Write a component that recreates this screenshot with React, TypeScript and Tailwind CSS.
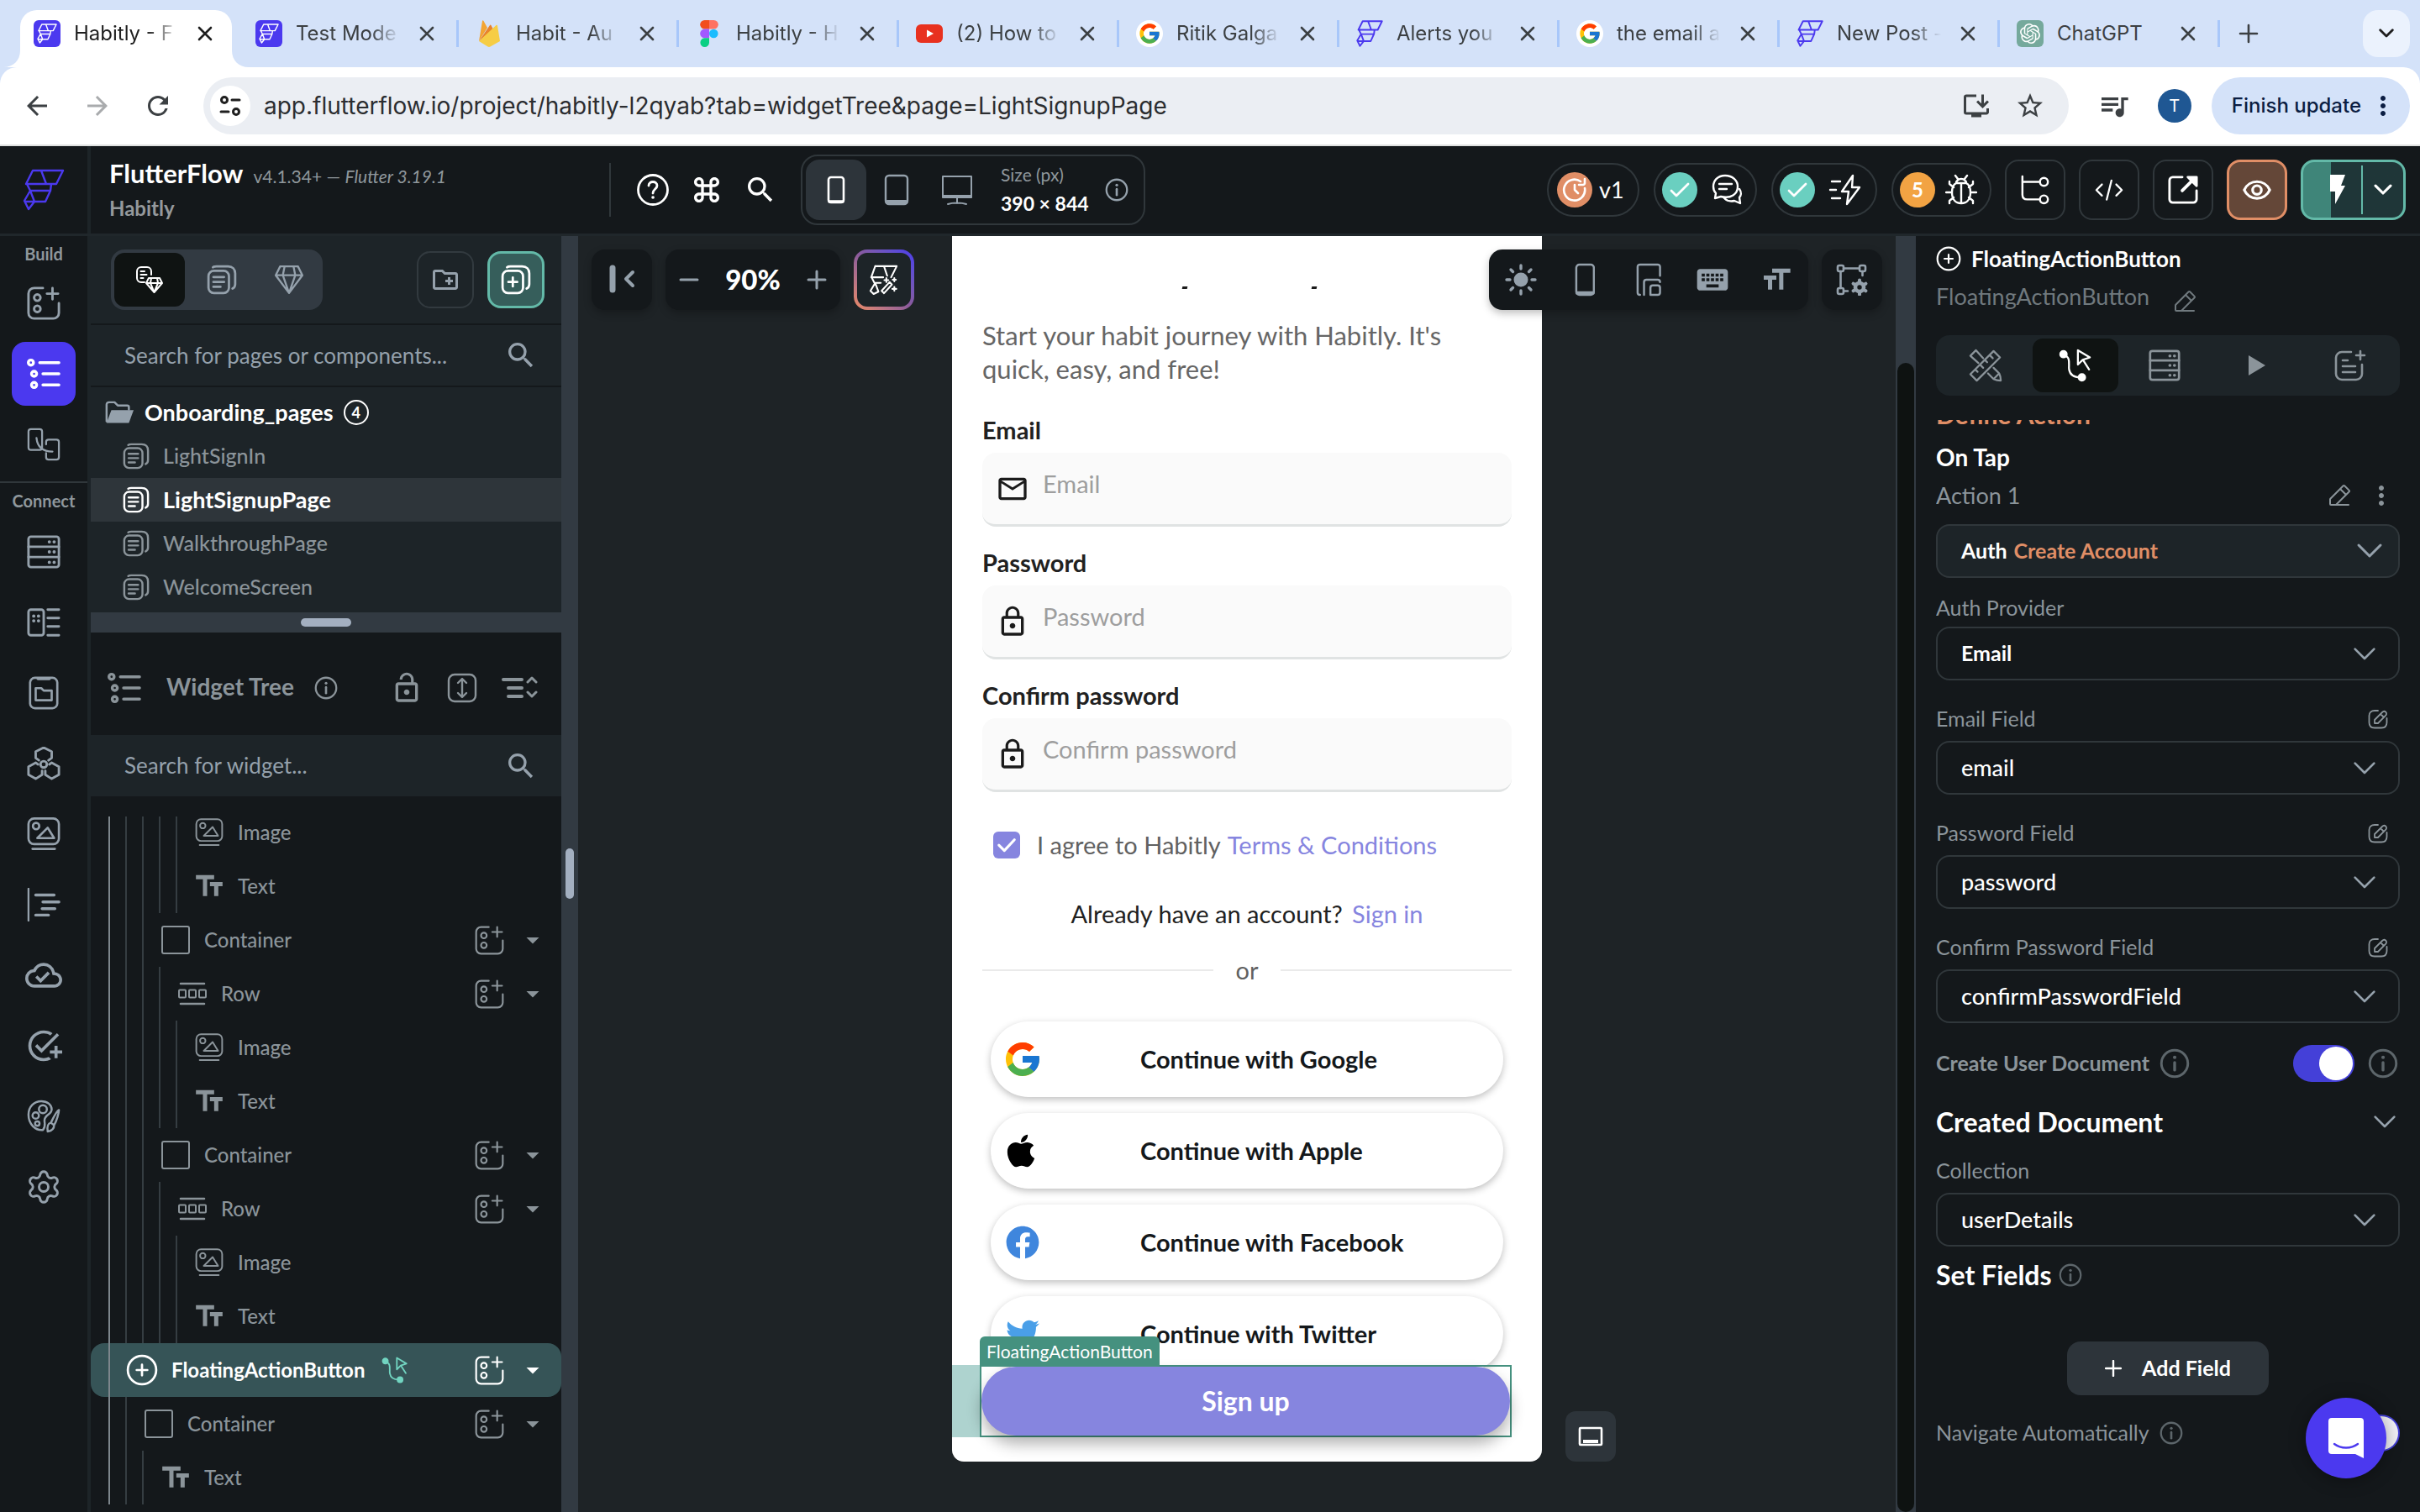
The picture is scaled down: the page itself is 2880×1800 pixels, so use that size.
import type { ReactNode } from "react";
import {
  MdAddTask,
  MdArrowBack,
  MdArrowDropDown,
  MdArrowForward,
  MdFormatSize,
  MdKeyboard,
  MdKeyboardCommandKey,
  MdLockOpen,
  MdLockOutline,
  MdMoreVert,
  MdOutlineCloudDone,
  MdOutlineCreateNewFolder,
  MdOutlineInstallDesktop,
  MdOutlineMail,
  MdQueueMusic,
  MdRefresh,
  MdSearch,
  MdStarBorder,
  MdTextFields,
} from "react-icons/md";
import { FcGoogle } from "react-icons/fc";
import { FaApple, FaFacebook, FaTwitter } from "react-icons/fa";
import { SiOpenai } from "react-icons/si";
import { PiPencilSimpleLine } from "react-icons/pi";
import { Settings } from "lucide-react";

/* ---------- icons ---------- */

type IconProps = { className?: string };

function Svg({ box, w = 2, className, children }: { box: string; w?: number; className?: string; children: ReactNode }) {
  return (
    <svg
      viewBox={box}
      fill="none"
      stroke="currentColor"
      strokeWidth={w}
      strokeLinecap="round"
      strokeLinejoin="round"
      className={className}
      aria-hidden="true"
    >
      {children}
    </svg>
  );
}

const FlowLogo = ({ className, w = 2.4 }: IconProps & { w?: number }) => (
  <Svg box="0 0 50 50" w={w} className={className}>
    <path d="M12 2H48L40 18H4L12 2ZM22 2l6 16M5 18l4 8h24l1-8M9 26 2 38l5 10 7-9-5-13M33 26l-6 13H3" />
  </Svg>
);

const AddWidget = ({ className, w = 3 }: IconProps & { w?: number }) => (
  <Svg box="0 0 42 42" w={w} className={className}>
    <path d="M20 2H9a7 7 0 0 0-7 7v24a7 7 0 0 0 7 7h24a7 7 0 0 0 7-7V21" />
    <path d="M32 2v14M25 9h14" />
    <circle cx="13" cy="14" r="4" />
    <circle cx="13" cy="28" r="4" />
  </Svg>
);

const TreeList = ({ className }: IconProps) => (
  <Svg box="0 0 42 42" w={3.6} className={className}>
    <circle cx="5" cy="7" r="3.2" />
    <path d="M16 7h24M20 21h20M20 35h20" />
    <circle cx="9" cy="21" r="3.2" />
    <circle cx="9" cy="35" r="3.2" />
  </Svg>
);

const Storyboard = ({ className }: IconProps) => (
  <Svg box="0 0 42 42" w={2.4} className={className}>
    <rect x="2" y="2" width="17" height="26" rx="3" />
    <path d="M24 21v-3a3 3 0 0 1 3-3h10a3 3 0 0 1 3 3v19a3 3 0 0 1-3 3H27a3 3 0 0 1-3-3v-5" />
    <path d="M12 13c1 10 7 17 20 17" />
  </Svg>
);

const Server = ({ className }: IconProps) => (
  <Svg box="0 0 42 42" w={3} className={className}>
    <rect x="2" y="2" width="38" height="38" rx="3" />
    <path d="M2 14.600h38M2 27.400h38" />
    <path d="M28 8.500h.1M34 8.500h.1M28 21h.1M34 21h.1M28 34h.1M34 34h.1" strokeWidth="4" />
  </Svg>
);

const DataTypes = ({ className }: IconProps) => (
  <Svg box="0 0 42 42" w={3} className={className}>
    <rect x="2" y="5" width="19" height="32" rx="3" />
    <path d="M26 5h14M26 15.500h14M26 26h14M26 37h14" />
    <path d="M8.500 13h.1M14.500 13h.1M8.500 19h.1M14.500 19h.1" strokeWidth="4" />
  </Svg>
);

const Assets = ({ className }: IconProps) => (
  <Svg box="0 0 42 42" w={2.8} className={className}>
    <rect x="4" y="2" width="34" height="38" rx="6" />
    <path d="M14 3h14" strokeWidth="4" />
    <path d="M11 15h7l3 3h10v12H11z" />
  </Svg>
);

const Hexes = ({ className }: IconProps) => (
  <Svg box="0 0 42 42" w={3} className={className}>
    <path d="M15 17l-4-3V6l10-5 10 5v8l-4 3" />
    <path d="M14 22l-3-2-9 5v10l9 5 8-5v-5M28 22l3-2 9 5v10l-9 5-8-5v-5" />
    <circle cx="21" cy="22" r="4" />
  </Svg>
);

const Picture = ({ className, w = 2.8 }: IconProps & { w?: number }) => (
  <Svg box="0 0 42 42" w={w} className={className}>
    <rect x="2" y="1.500" width="38" height="32" rx="7" />
    <circle cx="11.500" cy="11" r="4" />
    <path d="M13 26 L26 13 34 26ZM7 39.500h28" />
  </Svg>
);

const Timeline = ({ className }: IconProps) => (
  <Svg box="0 0 42 42" w={3.6} className={className}>
    <path d="M2 1v40" strokeWidth="2.4" />
    <path d="M11 9h23M20 17.500h20M19 26h16M11 34h16" />
  </Svg>
);

const Palette = ({ className }: IconProps) => (
  <Svg box="0 0 42 42" w={2.6} className={className}>
    <path d="M20 38c-9 1-18-7-18-19C2 9 9 2 18 2c8 0 13 5 13 10 0 7-9 7-9 14 0 5 2 7-2 12z" />
    <circle cx="20" cy="12" r="5" />
    <circle cx="11" cy="20" r="4" />
    <circle cx="13" cy="30" r="2.800" />
    <path d="M40 13c-3 1-8 12-10 16l4 3c3-5 6-15 6-19zM30 29c-4 1-5 4-4 11 5-1 8-4 8-8" />
  </Svg>
);

const Pages = ({ className, plus }: IconProps & { plus?: boolean }) => (
  <Svg box="0 0 34 34" w={2.6} className={className}>
    <rect x="2" y="7" width="23" height="25" rx="6" />
    <path d="M7 3c1-1 3-1 4-1h13c5 0 8 3 8 8v12c0 2-1 4-3 5" />
    {plus ? <path d="M13.500 14.500v10M8.500 19.500h10" /> : <path d="M7.500 14h12M7.500 19.500h12M7.500 25h8" />}
  </Svg>
);

const Gem = ({ className }: IconProps) => (
  <Svg box="0 0 34 34" w={2.2} className={className}>
    <path d="M7 2h20l5 10-15 20L2 12zM2 12h30M12 2l-2 10 7 20 7-20-2-10" />
  </Svg>
);

const PageGem = ({ className }: IconProps) => (
  <Svg box="0 0 34 34" w={2} className={className}>
    <path d="M11 20H7a5 5 0 0 1-5-5V7a5 5 0 0 1 5-5h7a5 5 0 0 1 5 5v4M6.500 7H11M6.500 11h7M6.500 15h3" />
    <path d="M16 15h13l3 6-9.500 11L13 21zM13 21h19M19 15l-1 6 4.500 11L27 21l-1-6" />
  </Svg>
);

const OpenFolder = ({ className }: IconProps) => (
  <Svg box="0 0 38 30" w={2.6} className={className}>
    <path d="M3 26V5a3 3 0 0 1 3-3h7l4 4h12a2 2 0 0 1 2 2v3" />
    <path d="M9 12h28l-6 16H3z" fill="currentColor" stroke="none" />
  </Svg>
);

const Info = ({ className }: IconProps) => (
  <Svg box="0 0 32 32" w={2.6} className={className}>
    <circle cx="16" cy="16" r="14" />
    <path d="M16 15v8" strokeWidth="3" />
    <path d="M16 9.500h.1" strokeWidth="3.600" />
  </Svg>
);

const Help = ({ className }: IconProps) => (
  <Svg box="0 0 40 40" w={2.8} className={className}>
    <circle cx="20" cy="20" r="17.500" />
    <path d="M15 15c0-6 10-6 10 0 0 4-5 4-5 9" />
    <path d="M20 29h.1" strokeWidth="3.600" />
  </Svg>
);

const PlusCircle = ({ className }: IconProps) => (
  <Svg box="0 0 36 36" w={2.6} className={className}>
    <circle cx="18" cy="18" r="16" />
    <path d="M18 12v12M12 18h12" />
  </Svg>
);

const Chevron = ({ className, w = 3 }: IconProps & { w?: number }) => (
  <Svg box="0 0 32 20" w={w} className={className}>
    <path d="M3 3l13 13L29 3" />
  </Svg>
);

const Flow = ({ className }: IconProps) => (
  <Svg box="0 0 42 42" w={2.4} className={className}>
    <circle cx="6" cy="7" r="4" fill="currentColor" />
    <circle cx="29" cy="36" r="4" fill="currentColor" />
    <path d="M6 8c10 2 6 12 7 18s5 10 14 10" />
    <path d="M24 2v18l6-6 9-3zM31 15l7 11" />
  </Svg>
);

const Tools = ({ className }: IconProps) => (
  <Svg box="0 0 42 42" w={2.4} className={className}>
    <path d="M2 32 31 3l8 8-29 29zM8 26l3 3M14 20l4 4M20 14l3 3M26 8l4 4" />
    <path d="M12 18 2 9l7-7 9 10M24 31l7 7c2 1 5 2 9 2 0-4-1-7-2-9l-7-7M31 38l7-7" />
  </Svg>
);

const RowIcon = ({ className }: IconProps) => (
  <Svg box="0 0 36 30" w={2} className={className}>
    <path d="M4 3h28M4 27h28" strokeWidth="2.600" />
    <rect x="2" y="10.500" width="8" height="9" rx="1" />
    <rect x="14" y="10.500" width="8" height="9" rx="1" />
    <rect x="26" y="10.500" width="8" height="9" rx="1" />
  </Svg>
);

const BoxIcon = ({ className }: IconProps) => (
  <Svg box="0 0 36 36" w={2} className={className}>
    <rect x="2" y="2" width="32" height="32" rx="2" />
  </Svg>
);

const EditBox = ({ className }: IconProps) => (
  <Svg box="0 0 24 24" w={1.8} className={className}>
    <path d="M12 2H8C4 2 1.500 4.500 1.500 8v8c0 4 2.500 6.500 6.500 6.500h8c4 0 6.500-2.500 6.500-6.500v-5" />
    <path d="M8 13l9-9c1.500-1.500 3-1.500 4.200-.3s1.200 2.700-.2 4.100L12 17H8zM15 6l4 4" />
  </Svg>
);

const PhoneIcon = ({ className }: IconProps) => (
  <Svg box="0 0 26 42" w={2.6} className={className}>
    <rect x="2" y="2" width="22" height="38" rx="4" />
    <path d="M3 37.500h20" strokeWidth="4" />
  </Svg>
);

const Tablet = ({ className }: IconProps) => (
  <Svg box="0 0 30 38" w={2.4} className={className}>
    <rect x="2" y="2" width="26" height="34" rx="4" />
    <path d="M4 33.500h22" strokeWidth="5" />
  </Svg>
);

const Desktop = ({ className }: IconProps) => (
  <Svg box="0 0 38 38" w={2} className={className}>
    <path d="M2 3h34v25H2z" />
    <path d="M3 27h32" strokeWidth="4" />
    <path d="M19 29v6M8 36c6-2 16-2 22 0" />
  </Svg>
);

const Sun = ({ className }: IconProps) => (
  <Svg box="0 0 38 38" w={3.4} className={className}>
    <circle cx="19" cy="19" r="8.500" fill="currentColor" stroke="none" />
    <path d="M19 2v4M19 32v4M2 19h4M32 19h4M7 7l2.500 2.500M28.500 28.500 31 31M31 7l-2.500 2.500M9.500 28.500 7 31" />
  </Svg>
);

const Screens = ({ className }: IconProps) => (
  <Svg box="0 0 32 42" w={2.6} className={className}>
    <path d="M30 16V5a3 3 0 0 0-3-3H5a3 3 0 0 0-3 3v32c0 2 1 3 3 3M10 40V24c0-2 1-3 3-3h14c2 0 3 1 3 3M18 40V31c0-2 1-3 3-3h6c2 0 3 1 3 3v6c0 2-1 3-3 3h-9z" />
  </Svg>
);

const NodesGear = ({ className }: IconProps) => (
  <Svg box="0 0 38 38" w={2.6} className={className}>
    <rect x="2" y="2" width="7" height="7" rx="2" />
    <rect x="28" y="2" width="7" height="7" rx="2" />
    <rect x="2" y="29" width="7" height="7" rx="2" />
    <path d="M9 5.500h19M5.500 9v20M31.500 9v5M9 32.500h5" />
    <circle cx="28" cy="28" r="5" strokeWidth="4.600" />
    <path d="M28 19.500v2M28 34.500v2M20.600 23.700l1.700 1M33.700 31.300l1.700 1M20.600 32.300l1.700-1M33.700 24.700l1.700-1" strokeWidth="4" />
  </Svg>
);

const Sparkle = ({ className }: IconProps) => (
  <Svg box="0 0 38 38" w={2.2} className={className}>
    <path d="M8 2h27l-7 14M8 2 3 16h15M19 2l4 12M4 17l3 6h8M8 23 2 33l4 4 6-3-4-11" />
    <path d="M16 33l10-11 3 3-10 11zM22 17v5M19.500 19.500h5M32 17v4M30 19h4M32 28v5M29.500 30.500h5" />
  </Svg>
);

const Bug = ({ className }: IconProps) => (
  <Svg box="0 0 38 38" w={2.4} className={className}>
    <path d="M13 11c-4 2-5 7-5 11 0 8 4 13 11 13s11-5 11-13c0-4-1-9-5-11zM19 12v22M13 11a6 5 0 0 1 12 0M12 2l3 4M26 2l-3 4M1 22h7M30 22h7M5 9v3l5 4M33 9v3l-5 4M5 35v-3l5-4M33 35v-3l-5-4" />
  </Svg>
);

const Chat = ({ className }: IconProps) => (
  <Svg box="0 0 38 38" w={2.4} className={className}>
    <path d="M17 2C8 2 3 8 3 15c0 4 1 6 3 8l-1 6 7-2c12 3 20-3 20-12 0-7-6-13-15-13zM10 12h15M10 18h9" />
    <path d="M34 18c3 4 2 8 0 10l1 7-7-3c-4 1-9 0-12-3" />
  </Svg>
);

const Optimize = ({ className }: IconProps) => (
  <Svg box="0 0 40 38" w={2.4} className={className}>
    <path d="M4 9h10M2 19h7M4 29h10M29 2 16 21h8l-2 15 15-20h-9z" />
  </Svg>
);

const Branch = ({ className }: IconProps) => (
  <Svg box="0 0 38 38" w={2.6} className={className}>
    <path d="M3 2v23c0 4 2 6 6 6h15M3 9h21" />
    <circle cx="30" cy="9" r="5" />
    <circle cx="30" cy="31" r="5" />
  </Svg>
);

const Code = ({ className }: IconProps) => (
  <Svg box="0 0 38 30" w={2.4} className={className}>
    <path d="M10 8l-7 7 7 7M28 8l7 7-7 7M22 3l-6 24" />
  </Svg>
);

const OpenExternal = ({ className }: IconProps) => (
  <Svg box="0 0 38 38" w={3} className={className}>
    <path d="M18 3H6a4 4 0 0 0-4 4v24a4 4 0 0 0 4 4h26a4 4 0 0 0 4-4V20" />
    <path d="M18 20 32 6" strokeWidth="4" />
    <path d="M25 3h11v11z" fill="currentColor" />
  </Svg>
);

const Eye = ({ className }: IconProps) => (
  <Svg box="0 0 38 30" w={3.4} className={className}>
    <path d="M3 15C9 1 29 1 35 15 29 29 9 29 3 15z" />
    <circle cx="19" cy="15" r="5.500" />
  </Svg>
);

const NoteAdd = ({ className }: IconProps) => (
  <Svg box="0 0 38 38" w={2.6} className={className}>
    <path d="M20 3H9a7 7 0 0 0-7 7v19a7 7 0 0 0 7 7h17a7 7 0 0 0 7-7V18M31 2v10M26 7h10M10 13h6M10 20h15M10 27h15" />
  </Svg>
);

const Close = ({ className }: IconProps) => (
  <Svg box="0 0 20 20" w={2.6} className={className}>
    <path d="M3 3l14 14M17 3 3 17" />
  </Svg>
);

const Figma = () => (
  <svg viewBox="0 0 22 32" className="h-8 w-[22px]" aria-hidden="true">
    <path d="M5.500 0H11v10.600H5.500a5.300 5.300 0 0 1 0-10.600z" fill="#f24e1e" />
    <path d="M11 0h5.500a5.300 5.300 0 0 1 0 10.600H11z" fill="#ff7262" />
    <path d="M5.500 10.600H11v10.700H5.500a5.300 5.300 0 0 1 0-10.700z" fill="#a259ff" />
    <circle cx="16.300" cy="16" r="5.300" fill="#1abcfe" />
    <path d="M5.500 21.300H11v5.400a5.300 5.300 0 1 1-5.500-5.400z" fill="#0acf83" />
  </svg>
);

const Firebase = () => (
  <svg viewBox="0 0 26 32" className="h-8 w-[26px]" aria-hidden="true">
    <path d="M1 25 5 1c.2-1 1-1 1.400-.2L11 9z" fill="#f3a433" />
    <path d="M1 25 14 6c.4-.8 1-.8 1.400 0L18 11z" fill="#e8832c" />
    <path d="M1 25 21.500 6c.6-.6 1.300-.3 1.500.5L26 25l-11.500 6.500c-1 .5-2 .5-3 0z" fill="#f6cd45" />
  </svg>
);

const Youtube = () => (
  <svg viewBox="0 0 32 22" className="h-[22px] w-8" aria-hidden="true">
    <rect width="32" height="22" rx="6" fill="#e8311f" />
    <path d="M13 6.500 21 11l-8 4.500z" fill="#fff" />
  </svg>
);

/* ---------- browser chrome ---------- */

const FlowTile = () => (
  <span className="flex size-8 items-center justify-center rounded-md bg-[#4b39ef] text-white">
    <FlowLogo className="size-6" w={3} />
  </span>
);
const GoogleTile = () => (
  <span className="flex size-8 items-center justify-center rounded-full bg-white">
    <FcGoogle className="size-7" />
  </span>
);
const FlowPlain = () => <FlowLogo className="size-8 text-[#4b39ef]" w={3} />;

const tabs: { title: string; icon: ReactNode }[] = [
  { title: "Test Mode", icon: <FlowTile /> },
  { title: "Habit - Au", icon: <Firebase /> },
  { title: "Habitly - H", icon: <Figma /> },
  { title: "(2) How to", icon: <Youtube /> },
  { title: "Ritik Galga", icon: <GoogleTile /> },
  { title: "Alerts you", icon: <FlowPlain /> },
  { title: "the email a", icon: <GoogleTile /> },
  { title: "New Post -", icon: <FlowPlain /> },
  {
    title: "ChatGPT",
    icon: (
      <span className="flex size-8 items-center justify-center rounded-md bg-[#75a99c] text-white">
        <SiOpenai className="size-6" />
      </span>
    ),
  },
];

function TabBody({ title, icon }: { title: string; icon: ReactNode }) {
  const fade = title === "ChatGPT" ? "" : "[mask-image:linear-gradient(to_right,black_90px,transparent_124px)]";
  return (
    <>
      <span className="flex w-8 shrink-0 justify-center">{icon}</span>
      <span className={`ml-4 w-[130px] shrink-0 whitespace-nowrap ${fade}`}>{title}</span>
      <button type="button" aria-label={`Close ${title}`} className="ml-4">
        <Close className="size-5" />
      </button>
    </>
  );
}

function Browser() {
  return (
    <header className="shrink-0 bg-[#d4e2f9] font-[Inter,sans-serif] text-[#3c4043]">
      <div className="flex h-20 items-start pl-6 text-2xl">
        <div className="relative mt-3 mr-2 flex h-[68px] w-[252px] shrink-0 items-center rounded-t-[20px] bg-white pb-3 pl-4 text-[#1f1f1f]">
          <svg viewBox="0 0 20 20" className="absolute bottom-0 -left-5 size-5" aria-hidden="true">
            <path d="M20 0v20H0C12 20 20 12 20 0z" fill="#fff" />
          </svg>
          <svg viewBox="0 0 20 20" className="absolute -right-5 bottom-0 size-5" aria-hidden="true">
            <path d="M0 0v20h20C8 20 0 12 0 0z" fill="#fff" />
          </svg>
          <TabBody title="Habitly - F" icon={<FlowTile />} />
        </div>
        {tabs.map((t) => (
          <div key={t.title} className="flex h-20 w-[262px] shrink-0 items-center">
            <div
              className={
                "flex h-8 w-full items-center border-r-3 border-[#a8c7fa] pl-5"
              }
            >
              <TabBody {...t} />
            </div>
          </div>
        ))}
        <button type="button" aria-label="New tab" className="mt-7 ml-[22px]">
          <Svg box="0 0 24 24" w={2.6} className="size-6">
            <path d="M12 2v20M2 12h20" />
          </Svg>
        </button>
        <button
          type="button"
          aria-label="Search tabs"
          className="mt-3 mr-3 ml-auto flex size-14 items-center justify-center rounded-[18px] bg-[#ebf2fd] text-[#1f1f1f]"
        >
          <Chevron className="w-[18px]" w={5} />
        </button>
      </div>
      <div className="flex h-[94px] items-center rounded-t-[20px] border-b-2 border-[#dfe1e0] bg-white pr-3 pl-6">
        <button type="button" aria-label="Back" className="flex w-10 justify-center">
          <MdArrowBack className="size-9" />
        </button>
        <button type="button" aria-label="Forward" className="ml-8 flex w-10 justify-center text-[#a9abad]">
          <MdArrowForward className="size-9" />
        </button>
        <button type="button" aria-label="Reload" className="ml-8 flex w-10 justify-center">
          <MdRefresh className="size-9" />
        </button>
        <div className="ml-[34px] flex h-[68px] min-w-0 flex-1 items-center rounded-full bg-[#ebeef3] pr-7 pl-2">
          <span className="mr-4 flex size-12 items-center justify-center rounded-full bg-white text-[#1f1f1f]">
            <Svg box="0 0 28 28" w={3} className="size-7">
              <circle cx="7" cy="7" r="3.500" />
              <path d="M16 7h9M3 21h9" />
              <circle cx="21" cy="21" r="3.500" />
            </Svg>
          </span>
          <input
            aria-label="Address"
            className="min-w-0 flex-1 bg-transparent text-[28px] text-[#2b2d30] outline-none"
            defaultValue="app.flutterflow.io/project/habitly-l2qyab?tab=widgetTree&page=LightSignupPage"
          />
          <MdOutlineInstallDesktop className="mr-7 size-9" />
          <MdStarBorder className="size-9" />
        </div>
        <MdQueueMusic className="ml-[34px] size-10" />
        <span className="ml-8 flex size-10 items-center justify-center rounded-full bg-[#1f5793] text-xl text-white">T</span>
        <button
          type="button"
          className="ml-6 flex h-[68px] items-center rounded-full bg-[#d4e2f9] pr-[14px] pl-6 text-2xl font-medium text-[#0b1d42]"
        >
          Finish update
          <MdMoreVert className="ml-2 size-9" />
        </button>
      </div>
    </header>
  );
}

/* ---------- app bar ---------- */

const CheckDot = () => (
  <span className="flex size-[42px] shrink-0 items-center justify-center rounded-full bg-[#6acfc0] text-white">
    <Svg box="0 0 24 18" w={2.8} className="w-6">
      <path d="M2 10l6 6L22 2" />
    </Svg>
  </span>
);

const pill = "flex h-16 items-center rounded-full border-2 border-[#30373b]";
const square = "flex h-[72px] w-[72px] items-center justify-center rounded-2xl border-2 border-[#30373b]";

function AppBar() {
  return (
    <div className="flex h-[107px] shrink-0 border-b-3 border-[#20272b] bg-[#14181b] text-white">
      <div className="flex w-[108px] shrink-0 items-center justify-center border-r-4 border-[#1d2428]">
        <FlowLogo className="size-[50px] text-[#4b39ef]" />
      </div>
      <div className="w-[617px] shrink-0 pt-3 pl-[22px]">
        <div className="flex items-baseline gap-3 leading-10">
          <h1 className="text-[31px] font-bold">FlutterFlow</h1>
          <p className="text-[21px] text-[#8f979c]">
            v4.1.34+ — <em>Flutter 3.19.1</em>
          </p>
        </div>
        <p className="text-2xl leading-9 font-bold text-[#95999c]">Habitly</p>
      </div>
      <div className="mt-5 h-16 border-l-2 border-[#30373b]" />
      <div className="flex h-[104px] items-center pl-[18px]">
        <button type="button" aria-label="Help" className="flex w-16 justify-center">
          <Help className="size-10" />
        </button>
        <button type="button" aria-label="Commands" className="flex w-16 justify-center">
          <MdKeyboardCommandKey className="size-10" />
        </button>
        <button type="button" aria-label="Search" className="flex w-16 justify-center">
          <MdSearch className="size-10" />
        </button>
        <div className="ml-4 flex h-[84px] items-center rounded-[20px] border-2 border-[#30373b] pr-[18px] pl-1 text-[#95a1ac]">
          <button type="button" aria-label="Phone size" className="flex h-[72px] w-[72px] items-center justify-center rounded-2xl bg-[#2d343a] text-white">
            <Svg box="0 0 22 34" w={2.6} className="h-[34px]">
              <rect x="2" y="2" width="18" height="30" rx="3" />
              <path d="M3 31h16" strokeWidth="3.600" />
            </Svg>
          </button>
          <button type="button" aria-label="Tablet size" className="flex w-[72px] justify-center">
            <Tablet className="h-[38px]" />
          </button>
          <button type="button" aria-label="Desktop size" className="flex w-[72px] justify-center">
            <Desktop className="size-[38px]" />
          </button>
          <div className="ml-4 w-[108px] pb-1 whitespace-nowrap">
            <p className="text-[21px] leading-9 text-[#8f979c]">Size (px)</p>
            <p className="text-[23px] leading-8 font-bold text-white">390 × 844</p>
          </div>
          <Info className="ml-4 size-7" />
        </div>
      </div>
      <div className="flex h-[104px] flex-1 items-center justify-end gap-4 pr-[17px]">
        <div className="flex gap-[17px]">
          <button type="button" className={`${pill} w-[110px] pl-[10px] text-[27px]`}>
            <span className="mr-2 flex size-[42px] shrink-0 items-center justify-center rounded-full bg-[#e08e66]">
              <Svg box="0 0 30 30" w={2.6} className="size-[30px]">
                <path d="M27 13a12.500 12.500 0 1 1-5-8M27 2v5c0 1-1 2-2 2h-5M15 9v6l4 4" />
              </Svg>
            </span>
            v1
          </button>
          <button type="button" aria-label="Comments" className={`${pill} w-[123px] pl-2`}>
            <CheckDot />
            <Chat className="ml-4 size-[38px]" />
          </button>
          <button type="button" aria-label="Optimizations" className={`${pill} w-[126px] pl-2`}>
            <CheckDot />
            <Optimize className="ml-4 w-10" />
          </button>
          <button type="button" aria-label="Issues" className={`${pill} w-[119px] pl-2`}>
            <span className="mr-3 flex size-[42px] items-center justify-center rounded-full bg-[#f2a343] text-2xl font-bold">5</span>
            <Bug className="size-[38px]" />
          </button>
        </div>
        <button type="button" aria-label="Branches" className={square}>
          <Branch className="size-9" />
        </button>
        <button type="button" aria-label="Code" className={square}>
          <Code className="w-9" />
        </button>
        <button type="button" aria-label="Share" className={square}>
          <OpenExternal className="size-9" />
        </button>
        <button type="button" aria-label="Preview" className="flex h-[72px] w-[72px] items-center justify-center rounded-2xl border-3 border-[#e08e66] bg-[#644738]">
          <Eye className="w-9" />
        </button>
        <div className="flex h-[72px] w-[125px] overflow-hidden rounded-2xl border-3 border-[#63b9a8] bg-linear-to-r from-[#3f8579] from-28% to-[#1f3638] to-28%">
          <button type="button" aria-label="Test mode" className="flex flex-1 items-center justify-end pr-[18px]">
            <svg viewBox="0 0 20 36" className="h-9" fill="#fff" aria-hidden="true">
              <path d="M1 0h18l-5 13h5L7 35V20H1z" />
            </svg>
          </button>
          <button type="button" aria-label="Run options" className="my-1 flex w-[50px] items-center justify-center border-l-2 border-[#63b9a8]">
            <Chevron className="w-[22px]" w={4.6} />
          </button>
        </div>
      </div>
    </div>
  );
}

/* ---------- navigation rail ---------- */

function RailButton({ label, children, active }: { label: string; children: ReactNode; active?: boolean }) {
  return (
    <button
      type="button"
      aria-label={label}
      className={
        active
          ? "my-1 flex h-[76px] w-[76px] shrink-0 items-center justify-center rounded-2xl bg-[#4b39ef] text-white"
          : "flex h-[84px] w-[76px] shrink-0 items-center justify-center"
      }
    >
      {children}
    </button>
  );
}

function Rail() {
  const s = "size-10";
  return (
    <nav className="flex w-[108px] shrink-0 flex-col items-center border-r-4 border-[#1d2428] bg-[#14181b] text-[#95a1ac]">
      <p className="h-[38px] w-full pt-[3px] text-center text-xl leading-9 font-bold text-[#8f979c]">Build</p>
      <RailButton label="Widget palette"><AddWidget className={s} /></RailButton>
      <RailButton label="Widget tree" active><TreeList className={s} /></RailButton>
      <RailButton label="Storyboard"><Storyboard className={s} /></RailButton>
      <p className="mt-[2px] h-[42px] w-full border-t-2 border-[#30373b] text-center text-xl leading-[42px] font-bold text-[#8f979c]">Connect</p>
      <RailButton label="Firestore"><Server className={s} /></RailButton>
      <RailButton label="Data types"><DataTypes className={s} /></RailButton>
      <RailButton label="App values"><Assets className={s} /></RailButton>
      <RailButton label="API calls"><Hexes className={s} /></RailButton>
      <RailButton label="Media assets"><Picture className={s} /></RailButton>
      <RailButton label="Custom code"><Timeline className={s} /></RailButton>
      <RailButton label="Cloud functions"><MdOutlineCloudDone className="size-11" /></RailButton>
      <RailButton label="Tests"><MdAddTask className="size-11" /></RailButton>
      <RailButton label="Theme"><Palette className={s} /></RailButton>
      <RailButton label="Settings"><Settings className="size-11" strokeWidth={1.6} /></RailButton>
    </nav>
  );
}

/* ---------- pages and widget tree ---------- */

type Node = { kind: "Image" | "Text" | "Container" | "Row" | "FloatingActionButton"; depth: number };

const nodes: Node[] = [
  { kind: "Image", depth: 5 },
  { kind: "Text", depth: 5 },
  { kind: "Container", depth: 3 },
  { kind: "Row", depth: 4 },
  { kind: "Image", depth: 5 },
  { kind: "Text", depth: 5 },
  { kind: "Container", depth: 3 },
  { kind: "Row", depth: 4 },
  { kind: "Image", depth: 5 },
  { kind: "Text", depth: 5 },
  { kind: "FloatingActionButton", depth: 1 },
  { kind: "Container", depth: 2 },
  { kind: "Text", depth: 3 },
];

const nodeIcons: Record<Node["kind"], ReactNode> = {
  Image: <Picture className="size-[34px]" w={2.4} />,
  Text: <MdTextFields className="size-10 shrink-0" />,
  Container: <BoxIcon className="size-9" />,
  Row: <RowIcon className="w-9" />,
  FloatingActionButton: <PlusCircle className="size-[38px] shrink-0" />,
};

function TreeRow({ kind, depth }: Node) {
  const active = kind === "FloatingActionButton";
  const parent = kind !== "Image" && kind !== "Text";
  return (
    <li className={active ? "flex h-16 items-center rounded-2xl bg-[#365457] pl-3 text-white" : "flex h-16 items-center pl-3 text-[#8b949a]"}>
      {Array.from({ length: depth }, (_, i) => (
        <span key={i} className="flex h-full w-5 shrink-0 justify-center">
          <span className={i === 0 ? "w-[2px] bg-[#7d868c]" : "w-[2px] bg-[#353d42]"} />
        </span>
      ))}
      <span className="ml-[11px] flex w-9 shrink-0 justify-center">{nodeIcons[kind]}</span>
      <span className={active ? "ml-[17px] text-2xl font-bold" : "ml-4 text-2xl font-medium"}>{kind}</span>
      {active && <Flow className="ml-5 size-8 text-[#72d5c1]" />}
      {parent && (
        <span className="mr-4 ml-auto flex items-center gap-4">
          <button type="button" aria-label={`Add to ${kind}`}>
            <AddWidget className="size-[35px]" w={2.6} />
          </button>
          <button type="button" aria-label={`Collapse ${kind}`}>
            <MdArrowDropDown className="size-9" />
          </button>
        </span>
      )}
    </li>
  );
}

const pages = ["LightSignIn", "LightSignupPage", "WalkthroughPage", "WelcomeScreen"];

function LeftPanel() {
  return (
    <aside className="flex w-[560px] shrink-0 flex-col bg-[#14181b]">
      <div className="bg-[#1d2428] text-[#95a1ac]">
        <div className="flex h-[106px] items-center border-b-2 border-[#14181b] pr-5 pl-6">
          <div className="flex h-[72px] w-[252px] items-center rounded-2xl bg-[#323a42] pl-1">
            <button type="button" aria-label="Pages and components" className="flex h-16 w-[84px] items-center justify-center rounded-xl bg-[#0f1312] text-white">
              <PageGem className="size-[34px]" />
            </button>
            <button type="button" aria-label="Pages" className="ml-1 flex w-20 justify-center">
              <Pages className="size-[36px]" />
            </button>
            <button type="button" aria-label="Components" className="flex w-20 justify-center">
              <Gem className="size-[36px]" />
            </button>
          </div>
          <button type="button" aria-label="New folder" className="ml-auto flex size-[68px] items-center justify-center rounded-2xl border-2 border-[#323a3f]">
            <MdOutlineCreateNewFolder className="size-9" />
          </button>
          <button type="button" aria-label="New page" className="ml-4 flex size-[68px] items-center justify-center rounded-2xl border-3 border-[#63b9a8] bg-[#365e5b] text-white">
            <Pages plus className="size-9" />
          </button>
        </div>
        <label className="flex h-[74px] items-center border-b-2 border-[#14181b] pr-7 pl-10">
          <span className="sr-only">Search for pages or components</span>
          <input className="min-w-0 flex-1 bg-transparent text-[26px] outline-none placeholder:text-[#95a1ac]" placeholder="Search for pages or components..." />
          <MdSearch className="size-10" />
        </label>
        <div className="flex h-14 items-center pt-1 pl-4 text-white">
          <OpenFolder className="w-9 text-[#95a1ac]" />
          <span className="ml-3 text-[27px] font-bold">Onboarding_pages</span>
          <span className="ml-3 flex size-[30px] items-center justify-center rounded-full border-2 border-white text-lg font-bold">4</span>
        </div>
        <ul className="pb-1">
          {pages.map((p) => (
            <li
              key={p}
              className={
                p === "LightSignupPage"
                  ? "flex h-[52px] items-center gap-4 bg-[#2e353a] pl-[38px] text-[27px] font-bold text-white"
                  : "flex h-[52px] items-center gap-4 pl-[38px] text-[25px] font-medium text-[#8b949a]"
              }
            >
              <Pages className="size-8" />
              {p}
            </li>
          ))}
        </ul>
      </div>
      <div className="flex h-6 shrink-0 items-center justify-center bg-[#323a42]">
        <span className="h-[10px] w-[60px] rounded-full bg-[#a3afc0]" />
      </div>
      <div className="flex h-[122px] shrink-0 items-center pt-[10px] pr-7 pl-5 text-[#8b949a]">
        <TreeList className="size-10" />
        <h2 className="ml-[30px] pb-1 text-[28px] font-bold">Widget Tree</h2>
        <Info className="ml-6 size-7" />
        <div className="ml-auto flex items-center gap-7">
          <MdLockOpen className="size-10" />
          <Svg box="0 0 36 36" w={2.4} className="size-9">
            <rect x="2" y="2" width="32" height="32" rx="7" />
            <path d="M18 8v20M13 12l5-5 5 5M13 24l5 5 5-5" />
          </Svg>
          <Svg box="0 0 44 30" w={4} className="w-11">
            <path d="M3 5h22M9 15h16M9 25h16" />
            <path d="M32 8l5-5 5 5M32 20l5 5 5-5" strokeWidth="3" />
          </Svg>
        </div>
      </div>
      <label className="flex h-[73px] shrink-0 items-center bg-[#1d2428] pr-7 pl-10 text-[#95a1ac]">
        <span className="sr-only">Search for widget</span>
        <input className="min-w-0 flex-1 bg-transparent text-[26px] outline-none placeholder:text-[#95a1ac]" placeholder="Search for widget..." />
        <MdSearch className="size-10" />
      </label>
      <div className="mt-6 min-h-0 flex-1 overflow-hidden">
        <ul className="-mt-[13px]">
          {nodes.map((n, i) => (
            <TreeRow key={i} {...n} />
          ))}
        </ul>
      </div>
    </aside>
  );
}

/* ---------- canvas ---------- */

function Field({ id, label, icon }: { id: string; label: string; icon: ReactNode }) {
  return (
    <div className="mb-[23px]">
      <label htmlFor={id} className="block h-[47px] text-[29px] leading-10 font-bold text-[#212121]">
        {label}
      </label>
      <div className="flex h-[88px] items-center rounded-2xl border-b-3 border-[#e0e3e3] bg-[#fafafa] pl-4 text-[#1b1b1b]">
        {icon}
        <input
          id={id}
          className="ml-4 min-w-0 flex-1 bg-transparent pb-3 text-[29px] outline-none placeholder:text-[#9e9e9e]"
          placeholder={label}
        />
      </div>
    </div>
  );
}

const providers: { name: string; icon: ReactNode }[] = [
  { name: "Google", icon: <FcGoogle className="-ml-1 size-12" /> },
  { name: "Apple", icon: <FaApple className="-ml-1 size-11 text-black" /> },
  { name: "Facebook", icon: <FaFacebook className="size-10 text-[#3f86dd]" /> },
  { name: "Twitter", icon: <FaTwitter className="size-10 text-[#4a9fe8]" /> },
];

function Phone() {
  return (
    <div className="relative h-[1459px] w-[702px] shrink-0 rounded-b-[14px] bg-white">
      <div className="h-full overflow-hidden px-9 pt-[60px]">
        <div className="flex h-[3px] gap-[148px] pl-[238px]" aria-hidden="true">
          <span className="w-[6px] -skew-x-12 bg-[#1b1b1b]" />
          <span className="w-[6px] -skew-x-12 bg-[#1b1b1b]" />
        </div>
        <p className="mt-[35px] text-[31px] leading-10 text-[#666666]">
          Start your habit journey with Habitly. It's
          <br />
          quick, easy, and free!
        </p>
        <div className="mt-[33px]">
          <Field id="email" label="Email" icon={<MdOutlineMail className="size-10" />} />
          <Field id="password" label="Password" icon={<MdLockOutline className="size-10" />} />
          <Field id="confirm" label="Confirm password" icon={<MdLockOutline className="size-10" />} />
        </div>
        <div className="mt-[43px] flex h-10 items-center pl-[13px] text-[29px]">
          <input id="agree" type="checkbox" defaultChecked className="peer sr-only" />
          <label htmlFor="agree" className="flex items-center text-[#616161]">
            <span className="mr-5 flex size-8 items-center justify-center rounded-md bg-[#8685df] text-white">
              <Svg box="0 0 26 20" w={3.4} className="w-6">
                <path d="M3 10l7 7L23 3" />
              </Svg>
            </span>
            I agree to Habitly
          </label>
          <a href="#terms" className="ml-2 text-[#8685df]">
            Terms &amp; Conditions
          </a>
        </div>
        <p className="mt-[42px] text-center text-[29px] leading-10 text-[#212121]">
          Already have an account?{" "}
          <a href="#signin" className="ml-1 text-[#8685df]">
            Sign in
          </a>
        </p>
        <div className="mt-[27px] flex h-10 items-center text-[29px] text-[#616161]">
          <span className="h-[2px] flex-1 bg-[#eaeaea]" />
          <span className="w-20 text-center">or</span>
          <span className="h-[2px] flex-1 bg-[#eaeaea]" />
        </div>
        <div className="mx-[10px] mt-[41px] flex flex-col gap-[19px]">
          {providers.map((p) => (
            <button
              key={p.name}
              type="button"
              className="flex h-[90px] items-center rounded-full bg-white pl-[18px] text-left text-[29px] font-bold text-[#14181b] shadow-[0_3px_8px_rgba(0,0,0,0.25)]"
            >
              <span className="w-[160px]">{p.icon}</span>
              Continue with {p.name}
            </button>
          ))}
        </div>
      </div>
      <div className="absolute inset-x-0 bottom-[29px] flex h-[86px] pr-9">
        <span className="w-[33px] shrink-0 bg-[#aed3cf]" />
        <div className="relative flex-1 border-2 border-[#45917f]">
          <span className="absolute bottom-full -left-[2px] z-10 flex h-9 items-center rounded-t-md bg-[#45917f] px-2 text-[21px] text-white">
            FloatingActionButton
          </span>
          <button
            type="button"
            className="h-full w-full rounded-full bg-[#8685df] text-[32px] font-bold text-white shadow-[0_10px_18px_rgba(0,0,0,0.3)]"
          >
            Sign up
          </button>
        </div>
      </div>
      <button
        type="button"
        aria-label="Toggle bottom bar"
        className="absolute bottom-0 left-full ml-7 flex size-[60px] items-center justify-center rounded-xl bg-[#2d343a] text-white"
      >
        <Svg box="0 0 30 24" w={2.6} className="w-[30px]">
          <rect x="2" y="2" width="26" height="20" rx="1" />
          <path d="M6 18h18" strokeWidth="4" strokeLinecap="butt" />
        </Svg>
      </button>
    </div>
  );
}

const floating = "flex h-[72px] items-center rounded-2xl bg-[#14181b] shadow-[0_4px_10px_rgba(0,0,0,0.25)]";
const tool = "flex w-[76px] justify-center";

function Canvas() {
  return (
    <main className="relative flex min-w-0 flex-1 items-start justify-center overflow-hidden bg-[#1e2326] pl-6">
      <Phone />
      <div className="absolute top-4 left-4 flex gap-4 text-[#95a1ac]">
        <button type="button" aria-label="Hide panel" className={`${floating} w-[72px] justify-center`}>
          <Svg box="0 0 32 36" w={4} className="h-9 w-8">
            <path d="M5 4v26" strokeWidth="7" />
            <path d="M29 9l-8 8 8 8" />
          </Svg>
        </button>
        <div className={`${floating} w-[208px] justify-between px-4`}>
          <button type="button" aria-label="Zoom out">
            <Svg box="0 0 24 24" w={3} className="size-6"><path d="M2 12h20" /></Svg>
          </button>
          <span className="text-[33px] font-black text-white">90%</span>
          <button type="button" aria-label="Zoom in">
            <Svg box="0 0 24 24" w={3} className="size-6"><path d="M2 12h20M12 2v20" /></Svg>
          </button>
        </div>
        <button type="button" aria-label="Generate with AI" className="rounded-2xl bg-linear-to-bl from-[#4b39ef] via-[#8a5a9c] to-[#ee8b60] p-1 text-white">
          <span className="flex size-16 items-center justify-center rounded-xl bg-[#1d2428]">
            <Sparkle className="size-9" />
          </span>
        </button>
      </div>
      <div className="absolute top-4 right-4 flex gap-4 text-[#95a1ac]">
        <div className={`${floating} w-[380px]`}>
          <button type="button" aria-label="Light mode" className={tool}><Sun className="size-[38px]" /></button>
          <button type="button" aria-label="Device frame" className={tool}><PhoneIcon className="h-10" /></button>
          <button type="button" aria-label="Multiple screens" className={tool}><Screens className="h-10" /></button>
          <button type="button" aria-label="Keyboard" className={tool}><MdKeyboard className="size-11" /></button>
          <button type="button" aria-label="Text scale" className={tool}><MdFormatSize className="size-10" /></button>
        </div>
        <button type="button" aria-label="Canvas settings" className={`${floating} w-[72px] justify-center`}>
          <NodesGear className="size-[38px]" />
        </button>
      </div>
    </main>
  );
}

/* ---------- properties ---------- */

function SelectField({ id, label, value, bold, edit }: { id: string; label: string; value: string; bold?: boolean; edit?: boolean }) {
  return (
    <>
      <div className="flex h-8 items-center justify-between pr-[14px] text-[25px] text-[#8b949a]">
        <label htmlFor={id}>{label}</label>
        {edit && (
          <button type="button" aria-label={`Edit ${label}`}>
            <EditBox className="size-6" />
          </button>
        )}
      </div>
      <div className={bold ? "relative mt-[6px]" : "relative mt-[10px]"}>
        <select
          id={id}
          className={
            bold
              ? "h-16 w-full appearance-none rounded-2xl border-2 border-[#30373b] bg-transparent pl-7 text-[25px] font-bold text-white"
              : "h-16 w-full appearance-none rounded-2xl border-2 border-[#30373b] bg-transparent pl-7 text-[27px] font-medium text-white"
          }
        >
          <option>{value}</option>
        </select>
        <Chevron className="pointer-events-none absolute top-6 right-7 w-7 text-[#95a1ac]" />
      </div>
    </>
  );
}

function Properties() {
  return (
    <aside className="flex w-[600px] shrink-0 flex-col bg-[#14181b] px-6 pt-[6px] text-[#8b949a]">
      <div className="flex h-[42px] items-center gap-3 text-white">
        <PlusCircle className="size-[30px]" />
        <h2 className="text-[26px] font-bold">FloatingActionButton</h2>
      </div>
      <div className="flex h-12 items-center text-[27px] text-[#70797e]">
        FloatingActionButton
        <PiPencilSimpleLine className="mt-3 ml-[26px] size-8" />
      </div>
      <div className="mt-[22px] flex h-[72px] shrink-0 items-center rounded-2xl bg-[#1d2428] px-1 text-[#8b949a]">
        <button type="button" aria-label="Properties" className="flex flex-1 justify-center"><Tools className="size-10" /></button>
        <button type="button" aria-label="Actions" className="flex h-16 w-[102px] items-center justify-center rounded-xl bg-[#0f1312] text-white"><Flow className="size-10" /></button>
        <button type="button" aria-label="Backend query" className="flex flex-1 justify-center"><Server className="size-[38px]" /></button>
        <button type="button" aria-label="Animations" className="flex flex-1 justify-center">
          <svg viewBox="0 0 20 24" className="h-6" fill="currentColor" aria-hidden="true"><path d="M0 0l20 12L0 24z" /></svg>
        </button>
        <button type="button" aria-label="Documentation" className="flex flex-1 justify-center"><NoteAdd className="size-[38px]" /></button>
      </div>
      <div className="mt-[29px] min-h-0 flex-1 overflow-hidden">
        <h3 className="-mt-[23px] text-[30px] leading-8 font-bold text-[#e08e66]">Define Action</h3>
        <h3 className="mt-[11px] text-[28px] leading-[48px] font-bold text-white">On Tap</h3>
        <div className="flex h-11 items-center text-[27px]">
          Action 1
          <button type="button" aria-label="Rename action" className="ml-auto"><PiPencilSimpleLine className="size-8" /></button>
          <button type="button" aria-label="More" className="mr-1 ml-4"><MdMoreVert className="size-9" /></button>
        </div>
        <button type="button" className="mt-3 flex h-16 w-full items-center gap-2 rounded-2xl border-2 border-[#30373b] bg-[#1d2428] pr-[18px] pl-7 text-[25px] font-bold text-white">
          Auth <span className="text-[#e08e66]">Create Account</span>
          <Chevron className="ml-auto w-8 text-[#95a1ac]" />
        </button>
        <div className="mt-5"><SelectField id="provider" label="Auth Provider" value="Email" bold /></div>
        <div className="mt-[30px]"><SelectField id="emailField" label="Email Field" value="email" edit /></div>
        <div className="mt-[30px]"><SelectField id="passwordField" label="Password Field" value="password" edit /></div>
        <div className="mt-[30px]"><SelectField id="confirmField" label="Confirm Password Field" value="confirmPasswordField" edit /></div>
        <div className="mt-6 flex h-12 items-center text-[25px] font-bold">
          <span id="createDoc">Create User Document</span>
          <Info className="ml-3 size-9 text-[#5d666b]" />
          <button type="button" role="switch" aria-checked="true" aria-labelledby="createDoc" className="ml-auto flex h-11 w-[73px] justify-end rounded-full bg-[#4440d8] p-[2px]">
            <span className="size-10 rounded-full bg-white" />
          </button>
          <Info className="mr-[2px] ml-4 size-9 text-[#5d666b]" />
        </div>
        <div className="mt-[22px] flex h-12 items-center justify-between pr-1 text-[32px] font-bold text-white">
          Created Document
          <Chevron className="w-7 text-[#95a1ac]" />
        </div>
        <div className="mt-[18px]"><SelectField id="collection" label="Collection" value="userDetails" /></div>
        <div className="mt-[14px] flex h-10 items-center text-[32px] font-bold text-white">
          Set Fields <Info className="ml-2 size-7 text-[#5d666b]" />
        </div>
        <button type="button" className="mx-auto mt-[59px] flex h-16 w-60 items-center justify-center gap-6 rounded-2xl bg-[#2d343a] text-[25px] font-bold text-white">
          <Svg box="0 0 20 20" w={2.4} className="size-5"><path d="M10 1v18M1 10h18" /></Svg>
          Add Field
        </button>
        <div className="mt-[21px] flex h-12 items-center text-[25px]">
          <span id="navAuto">Navigate Automatically</span>
          <Info className="ml-3 size-7 text-[#5d666b]" />
          <button type="button" role="switch" aria-checked="true" aria-labelledby="navAuto" className="ml-auto flex h-11 w-[73px] justify-end rounded-full bg-[#4440d8] p-[2px]">
            <span className="size-10 rounded-full bg-[#f1f1f6]" />
          </button>
        </div>
      </div>
    </aside>
  );
}

export default function App() {
  return (
    <div className="flex h-screen flex-col overflow-hidden bg-[#14181b] font-[Lato,sans-serif]">
      <Browser />
      <AppBar />
      <div className="flex min-h-0 flex-1">
        <Rail />
        <LeftPanel />
        <div className="flex w-5 shrink-0 justify-center bg-[#323a42] pt-[729px]">
          <span className="h-[60px] w-[10px] rounded-full bg-[#a3afc0]" />
        </div>
        <Canvas />
        <div className="w-6 shrink-0 border-x-2 border-[#323a42] bg-[#323a42] pt-[151px]">
          <div className="h-full rounded-full bg-[#0e1211]" />
        </div>
        <Properties />
      </div>
      <button
        type="button"
        aria-label="Open chat"
        className="fixed right-10 bottom-10 flex size-24 items-center justify-center rounded-full bg-[#4b39ef] shadow-[0_2px_20px_rgba(0,0,0,0.35)]"
      >
        <svg viewBox="0 0 42 48" className="h-12" aria-hidden="true">
          <path d="M4 0h34a4 4 0 0 1 4 4v44l-10-5H4a4 4 0 0 1-4-4V4a4 4 0 0 1 4-4z" fill="#fff" />
          <path d="M7 31c8 6 20 6 28 0" fill="none" stroke="#4b39ef" strokeWidth="2.400" strokeLinecap="round" />
        </svg>
      </button>
    </div>
  );
}
